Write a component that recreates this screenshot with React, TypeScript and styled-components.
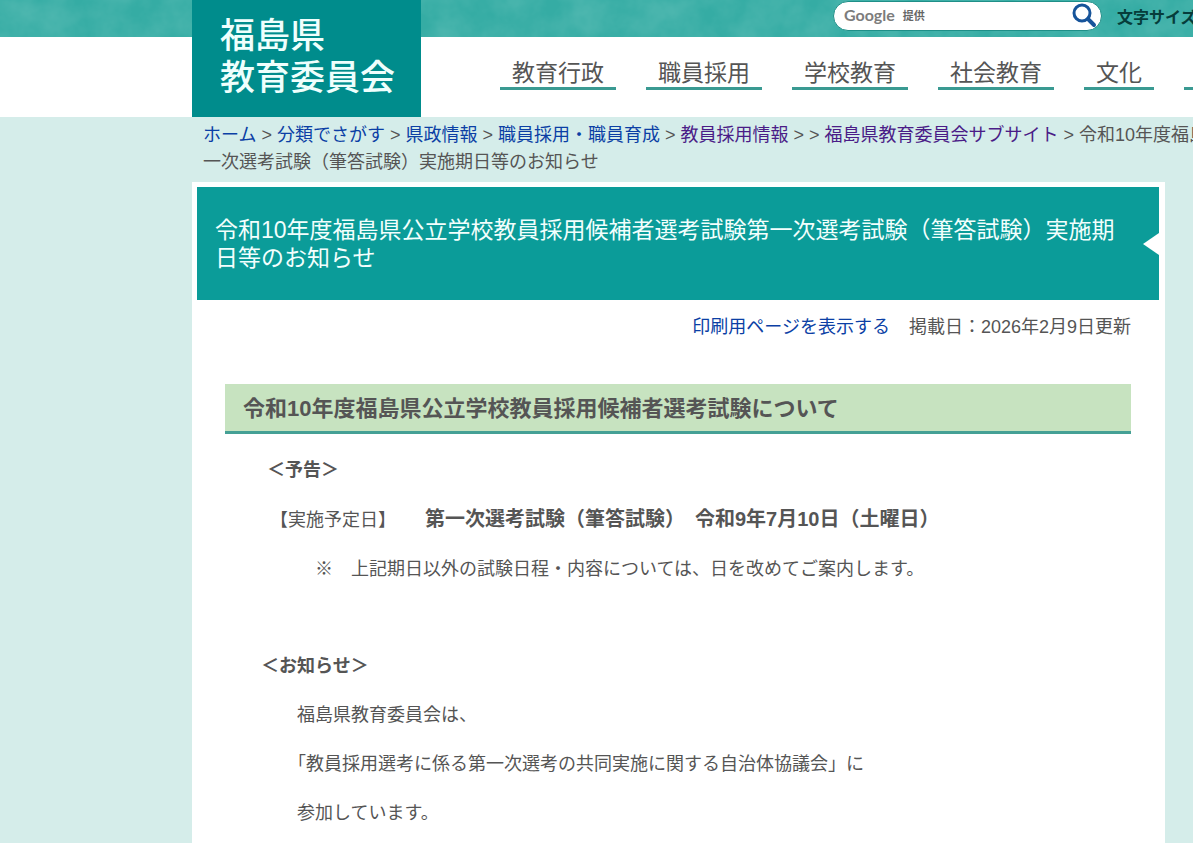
import React from "react";
import styled, { createGlobalStyle } from "styled-components";

const teal = "#008c8c";
const latin = `"Liberation Sans", "Noto Sans CJK JP", sans-serif`;
const japanese = `"Noto Sans CJK JP", sans-serif`;

const GlobalStyle = createGlobalStyle`
  * { box-sizing: border-box; }
  html { overflow-x: hidden; }
  body { margin: 0; background: #fff; color: #555; font: 18px/27px ${latin}; }
  p, h1, h2, h3 { margin: 0; }
  a { text-decoration: none; }
`;

const Page = styled.div`
  overflow: hidden;
`;

const Header = styled.header`
  display: grid;
  grid-template-columns: 192px 229px minmax(0, 1fr);
  grid-template-rows: 37px 80px;
`;

const Band = styled.div`
  position: relative;
  grid-area: 1 / 1 / 2 / 4;
  display: flex;
  justify-content: flex-end;
  background: #35aca4;
`;

const Texture = styled.svg`
  position: absolute;
  inset: 0;
  width: 100%;
  height: 100%;
`;

const Tools = styled.div`
  position: relative;
  display: flex;
  gap: 15px;
  padding-top: 1px;
  width: 360px;
`;

const SearchForm = styled.form`
  display: flex;
  flex: none;
  align-items: center;
  width: 269px;
  height: 30px;
  padding: 0 4px 0 10px;
  border: 1px solid #1f8f88;
  border-radius: 15px;
  background: #fff;
`;

const SearchLabel = styled.label`
  display: flex;
  align-items: center;
  gap: 8px;
  padding-bottom: 3px;
  color: #666;
  font: 700 11px/24px ${japanese};
`;

const Brand = styled.span`
  font: 700 16px/24px Lato, sans-serif;
  color: #7c7c7c;
`;

const SearchInput = styled.input`
  flex: 1;
  min-width: 0;
  height: 24px;
  border: 0;
  outline: 0;
  background: transparent;
  font: 14px ${latin};
`;

const SearchButton = styled.button`
  display: flex;
  padding: 0;
  border: 0;
  background: none;
`;

const SizeLabel = styled.span`
  flex: none;
  color: #063d3b;
  font: 700 16px/31px ${japanese};
  white-space: nowrap;
`;

const Logo = styled.a`
  position: relative;
  grid-area: 1 / 2 / 3 / 3;
  padding: 12px 0 0 28px;
  background: ${teal};
  color: #effffd;
  font: 500 35px/42px ${japanese};
`;

const Nav = styled.nav`
  grid-area: 2 / 3 / 3 / 4;
  display: flex;
  align-items: flex-start;
  gap: 30px;
  padding: 18px 0 0 79px;
  overflow: hidden;
`;

const NavLink = styled.a`
  flex: none;
  min-width: 24px;
  height: 35px;
  padding: 0 12px;
  border-bottom: 3px solid #3a9a92;
  color: #555;
  font: 23px/32px ${japanese};
`;

const Body = styled.div`
  padding: 5px 28px 0 192px;
  background: #d5edea;
`;

const Breadcrumb = styled.nav`
  width: 1340px;
  padding: 0 11px;
`;

const Crumb = styled.a<{ $visited?: boolean }>`
  color: ${(p) => (p.$visited ? "#4a1c87" : "#0b3fa5")};
`;

const Main = styled.main`
  margin-top: 6px;
  padding: 5px 6px 16px 5px;
  background: #fff;
`;

const Title = styled.h1`
  position: relative;
  padding: 29px 30px 28px 18px;
  background: #0b9c99;
  color: #f2fffd;
  font: 23px/28px ${latin};
`;

const Notch = styled.svg`
  position: absolute;
  right: 0;
  top: 46px;
`;

const Article = styled.article`
  padding: 14px 28px 0;
`;

const Meta = styled.div`
  display: flex;
  justify-content: flex-end;
  gap: 19px;
`;

const Section = styled.h2`
  margin-top: 43px;
  padding: 9px 18px 6px;
  border-bottom: 3px solid #45a095;
  background: #c7e3c0;
  font: 700 22px/32px ${latin};
`;

const Subheading = styled.h3<{ $indent: number }>`
  padding-left: ${(p) => p.$indent}px;
  font: 700 18px/27px ${latin};
`;

const Notice = styled.div`
  display: flex;
  flex-direction: column;
  gap: 22px;
  margin-top: 23px;
`;

const Line = styled.p<{ $indent: number }>`
  padding-left: ${(p) => p.$indent}px;
  text-spacing-trim: trim-start;
`;

const Strong = styled.strong`
  font-size: 20px;
`;

const Spacer = styled.div`
  height: 26px;
`;

const navItems = ["教育行政", "職員採用", "学校教育", "社会教育", "文化"];

const crumbs = [
  { text: "ホーム", sep: " > " },
  { text: "分類でさがす", sep: " > " },
  { text: "県政情報", sep: " > " },
  { text: "職員採用・職員育成", sep: " > " },
  { text: "教員採用情報", sep: " > > ", visited: true },
  { text: "福島県教育委員会サブサイト", sep: " > ", visited: true },
];

const title = "令和10年度福島県公立学校教員採用候補者選考試験第一次選考試験（筆答試験）実施期日等のお知らせ";

export default function App() {
  return (
    <Page>
      <GlobalStyle />
      <Header>
        <Band>
          <Texture aria-hidden="true">
            <filter id="paper" x="0" y="0" width="100%" height="100%">
              <feTurbulence type="fractalNoise" baseFrequency="0.03 0.03" numOctaves="4" seed="8" />
              <feColorMatrix values="0 0 0 0 0.5  0 0 0 0 0.8  0 0 0 0 0.75  0.3 0 0 0 -0.08" />
            </filter>
            <rect width="100%" height="100%" filter="url(#paper)" />
          </Texture>
          <Tools>
            <SearchForm>
              <SearchLabel htmlFor="q"><Brand>Google</Brand>提供</SearchLabel>
              <SearchInput id="q" type="text" />
              <SearchButton type="button" aria-label="検索">
                <svg width="26" height="26" viewBox="0 0 26 26" fill="none" stroke="#17549a">
                  <circle cx="11" cy="10" r="8" strokeWidth="3" />
                  <path d="M17 16l6 6" strokeWidth="4" strokeLinecap="round" />
                </svg>
              </SearchButton>
            </SearchForm>
            <SizeLabel>文字サイズ</SizeLabel>
          </Tools>
        </Band>
        <Logo href="#">福島県<br />教育委員会</Logo>
        <Nav>
          {navItems.map((item) => <NavLink key={item} href="#">{item}</NavLink>)}
          <NavLink href="#" aria-label="その他" />
        </Nav>
      </Header>
      <Body>
        <Breadcrumb>
          {crumbs.map((c) => (
            <React.Fragment key={c.text}>
              <Crumb href="#" $visited={c.visited}>{c.text}</Crumb>{c.sep}
            </React.Fragment>
          ))}
          {title}
        </Breadcrumb>
        <Main>
          <Title>
            {title}
            <Notch width="16" height="22" viewBox="0 0 16 22" aria-hidden="true">
              <path d="M16 0v22L0 11z" fill="#fff" />
            </Notch>
          </Title>
          <Article>
            <Meta>
              <Crumb href="#">印刷用ページを表示する</Crumb>
              <span>掲載日：2026年2月9日更新</span>
            </Meta>
            <Section>令和10年度福島県公立学校教員採用候補者選考試験について</Section>
            <Notice>
              <Subheading $indent={42}>＜予告＞</Subheading>
              <Line $indent={54}>【実施予定日】　<Strong>　第一次選考試験（筆答試験）　令和9年7月10日（土曜日）</Strong></Line>
              <Line $indent={90}>※　上記期日以外の試験日程・内容については、日を改めてご案内します。</Line>
              <Spacer />
              <Subheading $indent={36}>＜お知らせ＞</Subheading>
              <Line $indent={72}>福島県教育委員会は、</Line>
              <Line $indent={72}>「教員採用選考に係る第一次選考の共同実施に関する自治体協議会」に</Line>
              <Line $indent={72}>参加しています。</Line>
            </Notice>
          </Article>
        </Main>
      </Body>
    </Page>
  );
}
